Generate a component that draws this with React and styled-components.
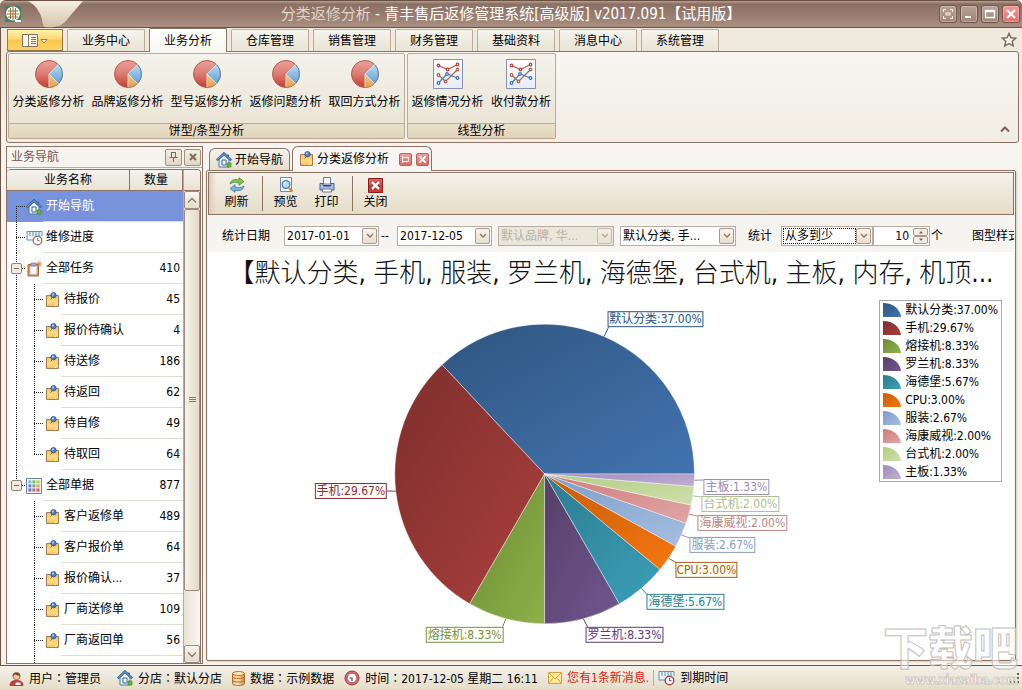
import React, { useState } from "react";
import styled, { createGlobalStyle, css } from "styled-components";

const LINE = "#8b7365";
const SOFT = "#b9aa9b";

const ribbonTabs = [
  "业务中心",
  "业务分析",
  "仓库管理",
  "销售管理",
  "财务管理",
  "基础资料",
  "消息中心",
  "系统管理",
];

const pieReports = [
  "分类返修分析",
  "品牌返修分析",
  "型号返修分析",
  "返修问题分析",
  "取回方式分析",
];
const lineReports = ["返修情况分析", "收付款分析"];

// guides: one entry per tree column, left to right
const navRows = [
  { name: "开始导航", icon: "home", guides: ["start"] },
  { name: "维修进度", icon: "progress", guides: ["tee"] },
  { name: "全部任务", count: 410, icon: "clipboard", guides: ["tee"], parent: true },
  { name: "待报价", count: 45, icon: "note", guides: ["line", "tee"] },
  { name: "报价待确认", count: 4, icon: "note", guides: ["line", "tee"] },
  { name: "待送修", count: 186, icon: "note", guides: ["line", "tee"] },
  { name: "待返回", count: 62, icon: "note", guides: ["line", "tee"] },
  { name: "待自修", count: 49, icon: "note", guides: ["line", "tee"] },
  { name: "待取回", count: 64, icon: "note", guides: ["line", "end"] },
  { name: "全部单据", count: 877, icon: "grid", guides: ["end"], parent: true },
  { name: "客户返修单", count: 489, icon: "note", guides: ["none", "tee"] },
  { name: "客户报价单", count: 64, icon: "note", guides: ["none", "tee"] },
  { name: "报价确认...", count: 37, icon: "note", guides: ["none", "tee"] },
  { name: "厂商送修单", count: 109, icon: "note", guides: ["none", "tee"] },
  { name: "厂商返回单", count: 56, icon: "note", guides: ["none", "tee"] },
];

// box: x, y, width of the callout; end: where the leader meets it
const slices = [
  { name: "默认分类", value: 37.0, from: "#305680", to: "#4273b0", ink: "#2f5680", bg: "#f4fbff", box: [400, 17, 96], end: [401, 33] },
  { name: "手机", value: 29.67, from: "#7d2f2d", to: "#ab3f3c", ink: "#843230", bg: "#fff8f8", box: [107, 189, 72], end: [179, 197] },
  { name: "熔接机", value: 8.33, from: "#6c8b36", to: "#8eb148", ink: "#748f42", bg: "#fdfff6", box: [218, 333, 78], end: [295, 333] },
  { name: "罗兰机", value: 8.33, from: "#554069", to: "#72568f", ink: "#58426e", bg: "#fcf9ff", box: [378, 333, 78], end: [380, 333] },
  { name: "海德堡", value: 5.67, from: "#2c7d90", to: "#3b9fb9", ink: "#2c7f90", bg: "#f4feff", box: [439, 300, 78], end: [440, 301] },
  { name: "CPU", value: 3.0, from: "#c85c09", to: "#f4770f", ink: "#a85c20", bg: "#fffdee", box: [468, 268, 62], end: [469, 269] },
  { name: "服装", value: 2.67, from: "#7c9ecb", to: "#a5bee0", ink: "#8b9db9", bg: "#fcfdff", box: [482, 243, 66], end: [482, 244] },
  { name: "海康威视", value: 2.0, from: "#cd7c7b", to: "#e1a6a5", ink: "#b88886", bg: "#fffdfd", box: [490, 221, 90], end: [490, 222] },
  { name: "台式机", value: 2.0, from: "#b2cc83", to: "#cfdfae", ink: "#afbc93", bg: "#fefffc", box: [494, 202, 78], end: [494, 203] },
  { name: "主板", value: 1.33, from: "#a08cbb", to: "#c0b1d3", ink: "#9b8eac", bg: "#fefdff", box: [496, 185, 66], end: [496, 186] },
];

/* ---------- icons ---------- */

const HomeIcon = () => (
  <svg width="16" height="16" viewBox="0 0 16 16" aria-hidden="true">
    <path d="M3 7.500V15h10V7.500L8 3z" fill="#e8f1fb" stroke="#4c76ab" />
    <path d="M12 2.500V5" stroke="#4c76ab" strokeWidth="2" />
    <path d="M.8 8.300L8 1.500l7.200 6.800" fill="none" stroke="#2f6096" strokeWidth="2.400" />
    <path d="M1.300 7.900L8 1.700l6.700 6.200" fill="none" stroke="#82b0da" strokeWidth="1" />
    <path d="M6 8h4v5H6z" fill="#fff" stroke="#3d5f92" />
    <path d="M11 11h4v4h-4z" fill="#63b83c" stroke="#3a8a2a" strokeWidth=".7" />
  </svg>
);

const ProgressIcon = ({ clock = "#9a7b6d" }) => (
  <svg width="17" height="16" viewBox="0 0 17 16" aria-hidden="true">
    <path d="M1 10V1.500h15V6" fill="#eef6fd" />
    <path d="M1 10V1.500h15V6M1 10h6M4 2v4M7 2v4M10 2v4M13 2v4" fill="none" stroke="#5a8fb9" />
    <circle cx="11.500" cy="10.500" r="4.300" fill="#fff" stroke={clock} strokeWidth="1.400" />
    <path d="M11.500 8v2.700h2.200" fill="none" stroke={clock} />
  </svg>
);

const ClipboardIcon = () => (
  <svg width="16" height="16" viewBox="0 0 16 16" aria-hidden="true">
    <path d="M2 3.500h10.500V15H2z" fill="#e8984a" stroke="#b7652a" />
    <path d="M4 5h7v8.500H4z" fill="#f4f7fc" stroke="#9aa5ba" strokeWidth=".6" />
    <path d="M5 2h5v3H5z" fill="#9fb0cc" stroke="#6b7a99" strokeWidth=".7" />
    <path d="M13 0v6M10 3h6M11 1l4 4M15 1l-4 4" stroke="#d98431" strokeWidth=".9" />
  </svg>
);

const NoteIcon = () => (
  <svg width="15" height="16" viewBox="0 0 15 16" aria-hidden="true">
    <path d="M1.500 3.500h12v11h-12z" fill="url(#noteFill)" stroke="#a97a4c" />
    <path d="M10 14l3-3" stroke="#fff0bd" />
    <circle cx="8.500" cy="3.200" r="2.700" fill="#4b82bd" stroke="#2a568c" strokeWidth=".8" />
    <circle cx="8" cy="2.500" r="1" fill="#b7d7f2" />
    <path d="M7 6l-1.500 1.500" stroke="#8a6239" />
  </svg>
);

const GridIcon = () => (
  <svg width="16" height="16" viewBox="0 0 16 16" aria-hidden="true">
    <path d="M.5.5h15v15H.5z" fill="#f3f5fb" stroke="#7482a8" />
    {["#6fc0d6", "#72b866", "#b6cc4c", "#5a86d0", "#5fae8a", "#e3a54a", "#7a6fc0", "#b863a4", "#dc6a4c"].map((c, i) => (
      <rect key={c} x={2 + (i % 3) * 4} y={2 + Math.floor(i / 3) * 4} width="4" height="4" fill={c} stroke="#f3f5fb" strokeWidth=".8" />
    ))}
  </svg>
);

const icons = {
  home: HomeIcon,
  progress: ProgressIcon,
  clipboard: ClipboardIcon,
  note: NoteIcon,
  grid: GridIcon,
};

const PieIcon = () => (
  <svg width="30" height="30" viewBox="0 0 30 30" aria-hidden="true">
    <circle cx="15" cy="15" r="13.500" fill="url(#pieRed)" stroke="#b35a50" />
    <path d="M15 15l9.500-9.500A13.500 13.500 0 0 1 24.500 24.500z" fill="url(#pieBlue)" stroke="#4d83b8" strokeWidth=".8" />
    <path d="M15 15l9.500 9.500A13.500 13.500 0 0 1 15 28.500z" fill="url(#pieOrange)" stroke="#b98346" strokeWidth=".8" />
    <path d="M15 28V15L24.500 5.500M15 15l9.500 9.500" fill="none" stroke="#fff" strokeOpacity=".7" />
  </svg>
);

const LineIcon = () => (
  <svg width="30" height="30" viewBox="0 0 30 30" aria-hidden="true">
    <path d="M.5.5h29v29H.5z" fill="url(#lineFill)" stroke="#8591b0" />
    <g fill="none" strokeWidth="1.200">
      <path d="M5.500 6.500l9 4 10-5" stroke="#c45a55" />
      <path d="M5.500 16l7 6.500 12-12" stroke="#a8664c" />
      <path d="M5.500 24l8.500-9 10.500 4" stroke="#4a7fc0" />
    </g>
    <g fill="#fff" strokeWidth="1.200">
      {[[5.5, 6.5], [14.5, 10.5], [24.5, 5.5]].map(([x, y]) => <circle key={x} cx={x} cy={y} r="1.300" stroke="#b8403c" />)}
      {[[5.5, 16], [12.5, 22.5], [24.5, 10.5]].map(([x, y]) => <circle key={x} cx={x} cy={y} r="1.300" stroke="#a8603c" />)}
      {[[5.5, 24], [14, 15], [24.5, 19]].map(([x, y]) => <circle key={x} cx={x} cy={y} r="1.300" stroke="#3b6fb5" />)}
    </g>
  </svg>
);

const RefreshIcon = () => (
  <svg width="16" height="16" viewBox="0 0 16 16" aria-hidden="true">
    <path d="M1 7c.5-4 5-5.500 9-4V.700L15 4.500 10 8.300V6C7 5 4 5 1 7z" fill="#8cc152" stroke="#4f8a2c" strokeWidth=".8" />
    <path d="M15 9c-.5 4-5 5.500-9 4v2.300L1 11.500 6 7.700V10c3 1 6 1 9-1z" fill="#7fb2dc" stroke="#3d74a8" strokeWidth=".8" />
  </svg>
);

const PreviewIcon = () => (
  <svg width="16" height="16" viewBox="0 0 16 16" aria-hidden="true">
    <path d="M2.500.5h11v14h-11z" fill="#fafcff" stroke="#7087b5" />
    <path d="M11 11l3.500 3.500" stroke="#d08a43" strokeWidth="2.400" />
    <circle cx="8" cy="7.500" r="3.800" fill="#b9dbf5" stroke="#3f7dbb" strokeWidth="1.300" />
    <path d="M6 7a2 2 0 0 1 2-2" fill="none" stroke="#fff" />
  </svg>
);

const PrintIcon = () => (
  <svg width="16" height="16" viewBox="0 0 16 16" aria-hidden="true">
    <path d="M4.500.5h7V7h-7z" fill="#fff" stroke="#5c77a8" />
    <path d="M1 6.500h3v2h8v-2h3V13H1z" fill="#a8bfe3" stroke="#3f5c94" />
    <path d="M4.500 8h7v1.500h-7z" fill="#33415c" />
    <path d="M3.500 12h9v3h-9z" fill="#fff" stroke="#5c77a8" />
  </svg>
);

const CloseIcon = () => (
  <svg width="15" height="15" viewBox="0 0 15 15" aria-hidden="true">
    <path d="M.5.5h14v14H.5z" fill="#cf3b38" stroke="#8d1d1c" />
    <path d="M1 1h13v6H1z" fill="#e27670" opacity=".6" />
    <path d="M4 4l7 7M11 4l-7 7" stroke="#8d1d1c" strokeWidth="4" />
    <path d="M4 4l7 7M11 4l-7 7" stroke="#fff" strokeWidth="2.600" />
  </svg>
);

const UserIcon = () => (
  <svg width="15" height="15" viewBox="0 0 15 15" aria-hidden="true">
    <path d="M1 14.500c0-4 3-5 6.500-5s6.500 1 6.500 5z" fill="#c93a34" stroke="#8d2521" strokeWidth=".7" />
    <circle cx="7.500" cy="5" r="3.600" fill="#f2c79c" stroke="#7a4a2c" strokeWidth=".7" />
    <path d="M3.700 5.500C3 .5 12 .5 11.300 5.500 10 4 7 4.500 6 3.300 5.500 4.500 4.500 4.500 3.700 5.500z" fill="#7c452a" />
    <path d="M6.500 11.500h5v2.500h-5z" fill="#fff" />
  </svg>
);

const DatabaseIcon = () => (
  <svg width="13" height="15" viewBox="0 0 13 15" aria-hidden="true">
    <path d="M.5 2.500v10c0 2.700 12 2.700 12 0v-10" fill="url(#dbFill)" stroke="#b0712d" />
    <ellipse cx="6.500" cy="2.500" rx="6" ry="2" fill="#fce7b6" stroke="#b0712d" />
    <path d="M.5 6c1 2 11 2 12 0M.5 9.500c1 2 11 2 12 0" fill="none" stroke="#a8672a" />
  </svg>
);

const ClockIcon = () => (
  <svg width="16" height="16" viewBox="0 0 16 16" aria-hidden="true">
    <circle cx="8" cy="8" r="7" fill="#d9696a" stroke="#9c3c3e" />
    <circle cx="8" cy="8" r="4.800" fill="#fff" stroke="#a94d4e" strokeWidth=".8" />
    <path d="M5.500 8H8v3" fill="none" stroke="#5c4a58" strokeWidth="1.200" />
  </svg>
);

const MailIcon = () => (
  <svg width="14" height="12" viewBox="0 0 14 12" aria-hidden="true">
    <path d="M.5.5h13v11H.5z" fill="#fdea9a" stroke="#d2a53d" />
    <path d="M1 1l6 6 6-6M1 11l4-5M13 11L9 6" fill="none" stroke="#d2a53d" />
  </svg>
);

const SharedGradients = () => (
  <SvgDefs aria-hidden="true">
    <defs>
      <linearGradient id="noteFill" x1="0" y1="0" x2="0" y2="1">
        <stop offset="0" stopColor="#f3c65d" />
        <stop offset=".6" stopColor="#fadb85" />
        <stop offset="1" stopColor="#f2c05b" />
      </linearGradient>
      <linearGradient id="pieRed" x1="0" y1="0" x2="0" y2="1">
        <stop offset="0" stopColor="#e9a198" />
        <stop offset=".45" stopColor="#dd8178" />
        <stop offset="1" stopColor="#c53c33" />
      </linearGradient>
      <linearGradient id="pieBlue" x1="0" y1="0" x2="0" y2="1">
        <stop offset="0" stopColor="#b9dcf4" />
        <stop offset="1" stopColor="#5f9fd6" />
      </linearGradient>
      <linearGradient id="pieOrange" x1="0" y1="0" x2="0" y2="1">
        <stop offset="0" stopColor="#f8cf8b" />
        <stop offset="1" stopColor="#e39a4b" />
      </linearGradient>
      <linearGradient id="lineFill" x1="0" y1="0" x2="0" y2="1">
        <stop offset="0" stopColor="#ffffff" />
        <stop offset="1" stopColor="#e6ebf7" />
      </linearGradient>
      <linearGradient id="dbFill" x1="0" y1="0" x2="1" y2="0">
        <stop offset="0" stopColor="#f0b45c" />
        <stop offset=".4" stopColor="#fde8b8" />
        <stop offset="1" stopColor="#d28a3a" />
      </linearGradient>
      {slices.map((s, i) => (
        <linearGradient key={s.name} id={`slice${i}`} x1="0" y1="0" x2="1" y2="1">
          <stop offset="0" stopColor={s.from} />
          <stop offset="1" stopColor={s.to} />
        </linearGradient>
      ))}
    </defs>
  </SvgDefs>
);

/* ---------- chart ---------- */

const CX = 337;
const CY = 180;
const R = 150;

const pointAt = (turn) => {
  const a = turn * Math.PI * 2;
  return [CX + R * Math.cos(a), CY - R * Math.sin(a)];
};

const label = (s) => `${s.name}:${s.value.toFixed(2)}%`;

const PieChart = () => {
  let sum = 0;
  const parts = slices.map((s) => {
    const start = sum / 100;
    sum += s.value;
    return { ...s, start, stop: sum / 100 };
  });

  return (
    <ChartSvg viewBox="0 0 672 352" role="img" aria-label="分类返修分析">
      {parts.map((s, i) => {
        const [x1, y1] = pointAt(s.start);
        const [x2, y2] = pointAt(s.stop);
        return (
          <path
            key={s.name}
            d={`M${CX} ${CY}L${x1} ${y1}A${R} ${R} 0 0 0 ${x2} ${y2}z`}
            fill={`url(#slice${i})`}
            stroke="#fff"
            strokeOpacity=".5"
            strokeWidth=".8"
          />
        );
      })}
      {parts.map((s) => {
        const [x, y] = pointAt((s.start + s.stop) / 2);
        const [bx, by, bw] = s.box;
        return (
          <g key={s.name}>
            <path d={`M${x} ${y}L${s.end[0]} ${s.end[1]}`} stroke={s.ink} />
            <rect x={bx + 0.5} y={by + 0.5} width={bw - 1} height="15" fill={s.bg} stroke={s.ink} />
            <text x={bx + bw / 2} y={by + 12} textAnchor="middle" fill={s.ink}>{label(s)}</text>
          </g>
        );
      })}
    </ChartSvg>
  );
};

/* ---------- small parts ---------- */

const Chevron = () => (
  <svg width="8" height="6" viewBox="0 0 8 6" aria-hidden="true">
    <path d="M1 1l3 3 3-3" fill="none" stroke="#8b7365" strokeWidth="1.300" />
  </svg>
);

const DateField = ({ title, initial }) => {
  const [value, setValue] = useState(initial);
  return (
    <Field $width={95}>
      <FieldInput aria-label={title} value={value} onChange={(e) => setValue(e.target.value)} />
      <DropButton type="button" aria-label={`${title} ▾`}><Chevron /></DropButton>
    </Field>
  );
};

const SelectField = ({ title, text, width, disabled, focused }) => (
  <Field $width={width} $disabled={disabled}>
    <FieldSelect aria-label={title} disabled={disabled} $focused={focused}>
      <option>{text}</option>
    </FieldSelect>
    <DropButton as="span" $disabled={disabled}><Chevron /></DropButton>
  </Field>
);

const NavRow = ({ row, selected, onSelect }) => {
  const Icon = icons[row.icon];
  return (
    <Row $selected={selected} onClick={onSelect}>
      <td>
        <NameCell>
          {row.guides.map((g, i) => (
            <Guide key={i} $kind={g}>
              {row.parent && <Expander type="button" aria-label={row.name} />}
            </Guide>
          ))}
          <IconSlot><Icon /></IconSlot>
          <NameText>{row.name}</NameText>
        </NameCell>
      </td>
      <CountCell>{row.count}</CountCell>
    </Row>
  );
};

const App = () => {
  const [tab, setTab] = useState(1);
  const [selected, setSelected] = useState(0);
  const [limit, setLimit] = useState("10");

  return (
    <Window>
      <GlobalStyle />
      <SharedGradients />

      <TitleBar>
        <svg width="16" height="16" viewBox="0 0 16 16" aria-hidden="true">
          <path d="M0 0h16v16H0z" fill="#3f8067" />
          <circle cx="8" cy="7.500" r="7" fill="#fffdf2" />
          <path d="M3 5h10M2 8h12M3 11h10M5.500 2v11M8 1v13M10.500 2v11" stroke="#99703e" />
          <path d="M10 14h6v2h-6z" fill="#fff" />
        </svg>
        <svg width="59" height="27" viewBox="0 0 59 27" aria-hidden="true">
          <defs>
            <linearGradient id="swoosh" x1="0" y1="0" x2="0" y2="1">
              <stop offset="0" stopColor="#f4f0e2" />
              <stop offset="1" stopColor="#d6c4a9" />
            </linearGradient>
          </defs>
          <path d="M4 0h55C51 9 46 15 42 20c-5 5-9 7-22 6-2-3-1-9-5-15C12 5 9 3 4 0z" fill="url(#swoosh)" />
        </svg>
        <TitleText><span>分类返修分析</span> - 青丰售后返修管理系统[高级版] v2017.091【试用版】</TitleText>
        <WindowButton type="button" aria-label="全屏">
          <svg width="12" height="12" viewBox="0 0 12 12">
            <path d="M1.500 4V1.500H4M8 1.500h2.500V4M10.500 8v2.500H8M4 10.500H1.500V8M4 5h4v2H4z" fill="none" stroke="#f4e9e2" strokeWidth="1.200" />
          </svg>
        </WindowButton>
        <WindowButton type="button" aria-label="最小化">
          <svg width="12" height="12" viewBox="0 0 12 12"><path d="M2 9h6" stroke="#fff" strokeWidth="2" /></svg>
        </WindowButton>
        <WindowButton type="button" aria-label="最大化">
          <svg width="12" height="12" viewBox="0 0 12 12"><path d="M1.500 2.500h9v7h-9zM1 3.500h10" fill="none" stroke="#fff" strokeWidth="1.300" /></svg>
        </WindowButton>
        <WindowButton type="button" aria-label="关闭" $danger>
          <svg width="12" height="12" viewBox="0 0 12 12"><path d="M2 2l8 8M10 2l-8 8" stroke="#fff" strokeWidth="2.400" /></svg>
        </WindowButton>
      </TitleBar>

      <Client>
        <TabRow>
          <MenuButton type="button" aria-label="菜单">
            <svg width="26" height="13" viewBox="0 0 26 13">
              <path d="M.5.5h15v12H.5z" fill="#fffbe8" stroke="#83715c" />
              <path d="M6.500 1v11M9 3.500h5M9 5.500h5M9 7.500h5M9 9.500h5" stroke="#83715c" />
              <path d="M19 5.500h6l-3 3.500z" fill="#fff" stroke="#a37a3c" />
            </svg>
          </MenuButton>
          {ribbonTabs.map((t, i) => (
            <RibbonTab key={t} type="button" $active={i === tab} onClick={() => setTab(i)}>{t}</RibbonTab>
          ))}
          <Spacer />
          <BareButton type="button" aria-label="收藏">
            <svg width="16" height="16" viewBox="0 0 16 16">
              <path d="M8 1.500l2 4.200 4.600.5-3.400 3.100 1 4.600L8 11.600 3.800 13.900l1-4.600L1.400 6.200 6 5.700z" fill="#fff" stroke="#7d6a5e" strokeWidth="1.500" />
            </svg>
          </BareButton>
        </TabRow>

        <Ribbon>
          <Group>
            <GroupItems>
              {pieReports.map((r) => (
                <ReportButton key={r} type="button"><PieIcon />{r}</ReportButton>
              ))}
            </GroupItems>
            <GroupTitle>饼型/条型分析</GroupTitle>
          </Group>
          <Group>
            <GroupItems>
              {lineReports.map((r) => (
                <ReportButton key={r} type="button" $narrow={r.length < 6}><LineIcon />{r}</ReportButton>
              ))}
            </GroupItems>
            <GroupTitle>线型分析</GroupTitle>
          </Group>
          <Spacer />
          <CollapseButton type="button" aria-label="折叠">
            <svg width="10" height="7" viewBox="0 0 10 7"><path d="M1 5.500l4-4 4 4" fill="none" stroke="#7d6357" strokeWidth="2" /></svg>
          </CollapseButton>
        </Ribbon>

        <Workspace>
          <NavPanel>
            <PanelHeader>
              <h2>业务导航</h2>
              <PanelButton type="button" aria-label="固定">
                <svg width="9" height="10" viewBox="0 0 9 10"><path d="M2.500 0v5M6.500 0v5M2 .5h5M.5 5.500h8M4.500 6v4" fill="none" stroke="#7d6a5e" /></svg>
              </PanelButton>
              <PanelButton type="button" aria-label="关闭">
                <svg width="8" height="8" viewBox="0 0 8 8"><path d="M1 1l6 6M7 1L1 7" stroke="#7d6a5e" strokeWidth="2" /></svg>
              </PanelButton>
            </PanelHeader>
            <TreeBox>
              <TreeScroll>
                <NavTable>
                  <thead>
                    <tr>
                      <th>业务名称</th>
                      <CountHead>数量</CountHead>
                    </tr>
                  </thead>
                  <tbody>
                    {navRows.map((row, i) => (
                      <NavRow key={row.name} row={row} selected={i === selected} onSelect={() => setSelected(i)} />
                    ))}
                  </tbody>
                </NavTable>
                <TreeTail><Guide $kind="none" /><Guide $kind="line" /></TreeTail>
              </TreeScroll>
              <ScrollColumn>
                <HeadFiller />
                <ScrollButton type="button" aria-label="向上">
                  <svg width="10" height="7" viewBox="0 0 10 7"><path d="M1 5.500l4-4 4 4" fill="none" stroke="#8b7365" strokeWidth="1.300" /></svg>
                </ScrollButton>
                <Thumb><i /><i /><i /></Thumb>
                <Track />
                <ScrollButton type="button" aria-label="向下">
                  <svg width="10" height="7" viewBox="0 0 10 7"><path d="M1 1.500l4 4 4-4" fill="none" stroke="#8b7365" strokeWidth="1.300" /></svg>
                </ScrollButton>
              </ScrollColumn>
            </TreeBox>
          </NavPanel>

          <Document>
            <DocTabs>
              <DocTab><a href="#start"><HomeIcon />开始导航</a></DocTab>
              <DocTab $active>
                <a href="#report"><NoteIcon />分类返修分析</a>
                <TabAction type="button" aria-label="还原">
                  <svg width="7" height="7" viewBox="0 0 7 7"><path d="M.5 0v7M1 1.500h5.500v4H1" fill="none" stroke="#fff" /></svg>
                </TabAction>
                <TabAction type="button" aria-label="关闭标签">
                  <svg width="7" height="7" viewBox="0 0 7 7"><path d="M0 0l7 7M7 0L0 7" stroke="#fff" strokeWidth="1.800" /></svg>
                </TabAction>
              </DocTab>
            </DocTabs>
            <DocFrame>
              <Toolbar>
                <ToolButton type="button"><RefreshIcon />刷新</ToolButton>
                <ToolDivider />
                <ToolButton type="button"><PreviewIcon />预览</ToolButton>
                <ToolButton type="button"><PrintIcon />打印</ToolButton>
                <ToolDivider />
                <ToolButton type="button"><CloseIcon />关闭</ToolButton>
              </Toolbar>

              <FilterBar>
                <DateLabel>统计日期</DateLabel>
                <DateField title="开始日期" initial="2017-01-01" />
                <Dash>--</Dash>
                <DateField title="结束日期" initial="2017-12-05" />
                <ComboPair>
                  <SelectField title="品牌" text="默认品牌, 华..." width={116} disabled />
                  <SelectField title="分类" text="默认分类, 手..." width={116} />
                </ComboPair>
                <CountLabel>统计</CountLabel>
                <SelectField title="排序" text="从多到少" width={92} focused />
                <Field $width={57}>
                  <FieldInput id="limit" aria-label="数量" $right value={limit} onChange={(e) => setLimit(e.target.value)} />
                  <Spinner>
                    <button type="button" aria-label="增加" onClick={() => setLimit(String(Number(limit) + 1))}>
                      <svg width="6" height="4" viewBox="0 0 6 4"><path d="M1 3.500h4L3 1z" fill="#7d6357" /></svg>
                    </button>
                    <button type="button" aria-label="减少" onClick={() => setLimit(String(Number(limit) - 1))}>
                      <svg width="6" height="4" viewBox="0 0 6 4"><path d="M1 .5h4L3 3z" fill="#7d6357" /></svg>
                    </button>
                  </Spinner>
                </Field>
                <UnitLabel htmlFor="limit">个</UnitLabel>
                <span>图型样式</span>
              </FilterBar>

              <ChartArea>
                <ChartTitle>【默认分类, 手机, 服装, 罗兰机, 海德堡, 台式机, 主板, 内存, 机顶...</ChartTitle>
                <ChartBody>
                  <PieChart />
                  <Legend>
                    {slices.map((s, i) => (
                      <li key={s.name}>
                        <svg width="18" height="14" viewBox="0 0 18 14" aria-hidden="true">
                          <path d="M0 14V0c10 0 17 6 18 14z" fill={`url(#slice${i})`} />
                        </svg>
                        {label(s)}
                      </li>
                    ))}
                  </Legend>
                </ChartBody>
              </ChartArea>
            </DocFrame>
          </Document>
        </Workspace>
      </Client>

      <StatusBar>
        <StatusItem $wide><UserIcon /><span>用户<Colon>：</Colon>管理员</span></StatusItem>
        <StatusItem><HomeIcon /><span>分店<Colon>：</Colon>默认分店</span></StatusItem>
        <StatusItem><DatabaseIcon /><span>数据<Colon>：</Colon>示例数据</span></StatusItem>
        <StatusItem><ClockIcon /><span>时间<Colon>：</Colon>2017-12-05 星期二 16:11</span></StatusItem>
        <StatusItem $alert><MailIcon /><span>您有1条新消息.</span></StatusItem>
        <StatusItem $divided><ProgressIcon clock="#a84a4c" /><span>到期时间</span></StatusItem>
        <Spacer />
        <svg width="11" height="11" viewBox="0 0 11 11" aria-hidden="true">
          <path d="M8 0h2v2H8zM8 4h2v2H8zM8 8h2v2H8zM4 4h2v2H4zM4 8h2v2H4zM0 8h2v2H0z" fill="#6e5c50" />
        </svg>
      </StatusBar>

      <Watermark>
        <strong>下载吧</strong>
        <span>www.xiazaiba.com</span>
      </Watermark>
    </Window>
  );
};

/* ---------- styles ---------- */

const GlobalStyle = createGlobalStyle`
  * {
    box-sizing: border-box;
  }
  body {
    margin: 0;
    background: #fbece1;
    font-family: "DejaVu Sans Condensed", "Noto Sans CJK SC", sans-serif;
    font-size: 12px;
    line-height: 16px;
    color: #000;
  }
  button, input, select {
    font: inherit;
    color: inherit;
    padding: 0;
    margin: 0;
  }
  svg {
    flex: none;
    display: block;
  }
`;

const SvgDefs = styled.svg`
  position: absolute;
  width: 0;
  height: 0;
`;

const Window = styled.div`
  position: relative;
  display: flex;
  flex-direction: column;
  height: 100vh;
  overflow: hidden;
`;

const Spacer = styled.div`
  flex: 1;
`;

const TitleBar = styled.header`
  display: flex;
  align-items: center;
  gap: 3px;
  flex: none;
  height: 28px;
  padding: 0 2px 0 5px;
  border-top: 1px solid #6b5044;
  border-bottom: 1px solid #6b5044;
  border-radius: 6px 6px 0 0;
  background: linear-gradient(#b59f94 0, #8b6f63 3px, #9a7e71 60%, #ab8f81 100%);
`;

const TitleText = styled.h1`
  flex: 1;
  margin: 0;
  font-size: 15px;
  line-height: 20px;
  font-weight: 400;
  text-align: center;
  white-space: nowrap;
  color: #fff;
  span {
    color: #e2d3c8;
  }
`;

const WindowButton = styled.button`
  display: flex;
  align-items: center;
  justify-content: center;
  width: 18px;
  height: 18px;
  border: 1px solid #6e5549;
  border-radius: 3px;
  box-shadow: inset 0 0 0 1px rgba(255, 255, 255, 0.3);
  background: ${(p) =>
    p.$danger ? "linear-gradient(#f09a98, #e46c6a)" : "linear-gradient(#b7a094, #a0877a)"};
`;

const Client = styled.div`
  display: flex;
  flex-direction: column;
  flex: 1;
  min-height: 0;
  padding: 0 3px 1px 5px;
  border-left: 1px solid #6b5346;
  background: linear-gradient(#efeadd 0, #efeadd 60px, #fbf3ec 116px);
`;

const TabRow = styled.nav`
  display: flex;
  align-items: flex-end;
  gap: 4px;
  height: 23px;
  padding: 0 2px 0 1px;
`;

const MenuButton = styled.button`
  display: flex;
  align-items: center;
  justify-content: center;
  width: 56px;
  height: 22px;
  border: 1px solid #94744c;
  background: linear-gradient(#fff2ab, #fdd874 45%, #fbc64b 50%, #fdd368);
`;

const RibbonTab = styled.button`
  width: 78px;
  height: 22px;
  border: 1px solid ${SOFT};
  border-bottom: 0;
  border-radius: 2px 2px 0 0;
  background: linear-gradient(#f5f3ec, #e9e3d4);
  ${(p) =>
    p.$active &&
    css`
      height: 24px;
      margin-bottom: -1px;
      border-color: ${LINE};
      background: linear-gradient(#ffffff, #f9f7f3);
      z-index: 1;
    `}
`;

const BareButton = styled.button`
  border: 0;
  background: none;
  align-self: center;
`;

const Ribbon = styled.section`
  display: flex;
  gap: 2px;
  flex: none;
  height: 92px;
  padding: 1px 8px 3px 1px;
  border: 1px solid ${LINE};
  border-radius: 3px;
  background: linear-gradient(#f8f6f2, #f1ede3);
`;

const Group = styled.div`
  display: flex;
  flex-direction: column;
  border: 1px solid ${SOFT};
  border-radius: 2px;
  background: linear-gradient(#f4f2ea, #e8e2d2);
`;

const GroupItems = styled.div`
  display: flex;
  flex: 1;
`;

const ReportButton = styled.button`
  display: flex;
  flex-direction: column;
  align-items: center;
  gap: 5px;
  width: ${(p) => (p.$narrow ? 68 : 79)}px;
  padding-top: 5px;
  border: 0;
  background: none;
  white-space: nowrap;
`;

const GroupTitle = styled.div`
  height: 15px;
  line-height: 15px;
  border-top: 1px solid ${SOFT};
  background: linear-gradient(#eae1cd, #e0d3b9);
  text-align: center;
`;

const CollapseButton = styled(BareButton)`
  align-self: flex-end;
  padding-bottom: 6px;
`;

const Workspace = styled.div`
  display: flex;
  gap: 3px;
  flex: 1;
  min-height: 0;
  padding-top: 3px;
`;

const NavPanel = styled.aside`
  display: flex;
  flex-direction: column;
  width: 197px;
  flex: none;
  border: 1px solid ${LINE};
  background: #f6f4ef;
`;

const PanelHeader = styled.div`
  display: flex;
  align-items: center;
  gap: 2px;
  height: 21px;
  padding: 0 1px 0 4px;
  border-bottom: 1px solid ${SOFT};
  h2 {
    flex: 1;
    margin: 0;
    font-size: 12px;
    font-weight: 400;
    color: #7b5548;
  }
`;

const PanelButton = styled.button`
  display: flex;
  align-items: center;
  justify-content: center;
  width: 17px;
  height: 17px;
  border: 1px solid #a08f80;
  border-radius: 2px;
  background: linear-gradient(#f3eee2, #e2d6c1);
`;

const TreeBox = styled.div`
  display: flex;
  flex: 1;
  min-height: 0;
  margin: 1px 1px 0 0;
  border-top: 1px solid ${LINE};
  border-right: 1px solid ${LINE};
  border-radius: 4px 4px 0 0;
  background: #fff;
  overflow: hidden;
`;

const TreeScroll = styled.div`
  display: flex;
  flex-direction: column;
  flex: 1;
  min-width: 0;
  overflow: hidden;
`;

const NavTable = styled.table`
  width: 100%;
  flex: none;
  table-layout: fixed;
  border-collapse: separate;
  border-spacing: 0;
  th {
    height: 21px;
    padding: 0;
    font-weight: 400;
    border-right: 1px solid ${LINE};
    border-bottom: 1px solid ${LINE};
    background: linear-gradient(#f5f3ed, #e9e3d6);
  }
  td {
    height: 31px;
    padding: 0;
  }
`;

const CountHead = styled.th`
  width: 53px;
`;

const Row = styled.tr`
  cursor: default;
  ${(p) =>
    p.$selected &&
    css`
      background: #7893dc;
      color: #fff;
    `}
`;

const NameCell = styled.div`
  display: flex;
  height: 31px;
`;

const dotsDown = "repeating-linear-gradient(#222 0 1px, transparent 1px 2px)";
const dotsAcross = "repeating-linear-gradient(90deg, #222 0 1px, transparent 1px 2px)";

const guideArt = {
  none: "none",
  line: `${dotsDown} 9px 0 / 1px 100% no-repeat`,
  tee: `${dotsDown} 9px 0 / 1px 100% no-repeat, ${dotsAcross} 9px 15px / 9px 1px no-repeat`,
  end: `${dotsDown} 9px 0 / 1px 15px no-repeat, ${dotsAcross} 9px 15px / 9px 1px no-repeat`,
  start: `${dotsDown} 9px 15px / 1px 16px no-repeat, ${dotsAcross} 9px 15px / 9px 1px no-repeat`,
};

const Guide = styled.span`
  display: flex;
  align-items: center;
  justify-content: center;
  flex: none;
  width: 18px;
  height: 100%;
  background: ${(p) => guideArt[p.$kind]};
`;

const Expander = styled.button`
  width: 11px;
  height: 11px;
  border: 1px solid #95816f;
  border-radius: 2px;
  background: linear-gradient(#7d6a5e, #7d6a5e) center / 5px 1px no-repeat, #f1ebdf;
`;

const IconSlot = styled.span`
  display: flex;
  align-items: center;
  justify-content: center;
  flex: none;
  width: 18px;
`;

const NameText = styled.span`
  flex: 1;
  padding-left: 3px;
  line-height: 30px;
  white-space: nowrap;
  border-bottom: 1px solid #dfddd0;
`;

const CountCell = styled.td`
  padding-right: 3px !important;
  text-align: right;
  border-bottom: 1px solid #dfddd0;
`;

const TreeTail = styled.div`
  display: flex;
  flex: 1;
`;

const ScrollColumn = styled.div`
  display: flex;
  flex-direction: column;
  width: 17px;
  border-left: 1px solid ${SOFT};
  background: #f5f0e6;
`;

const HeadFiller = styled.div`
  flex: none;
  height: 21px;
  border-bottom: 1px solid ${LINE};
  background: linear-gradient(#f5f3ed, #e9e3d6);
`;

const ScrollButton = styled.button`
  display: flex;
  align-items: center;
  justify-content: center;
  flex: none;
  height: 18px;
  border: 1px solid #9d8c7d;
  border-radius: 2px;
  background: linear-gradient(#f8f5ee, #e6ddcb);
`;

const Thumb = styled.div`
  display: flex;
  flex-direction: column;
  align-items: center;
  justify-content: center;
  gap: 1px;
  flex: 7;
  border: 1px solid #9d8c7d;
  border-radius: 2px;
  background: linear-gradient(90deg, #f6f3eb, #e2dac8);
  i {
    width: 7px;
    height: 1px;
    background: #8b7365;
  }
`;

const Track = styled.div`
  flex: 1;
  background: linear-gradient(90deg, #e9e1d2, #fbf9f5);
`;

const Document = styled.main`
  display: flex;
  flex-direction: column;
  flex: 1;
  min-width: 0;
  padding: 0 3px 3px 0;
  background: #f7f5f1;
`;

const DocTabs = styled.nav`
  display: flex;
  align-items: flex-end;
  gap: 2px;
  height: 24px;
  padding-left: 3px;
`;

const DocTab = styled.div`
  display: flex;
  align-items: center;
  gap: 4px;
  height: ${(p) => (p.$active ? 25 : 22)}px;
  margin-bottom: ${(p) => (p.$active ? "-1px" : 0)};
  padding: 0 ${(p) => (p.$active ? 2 : 6)}px 0 6px;
  border: 1px solid ${LINE};
  border-bottom: 0;
  border-radius: 6px 6px 0 0;
  background: ${(p) => (p.$active ? "#f8f6f3" : "linear-gradient(#f6f3ec, #e6decb)")};
  z-index: 1;
  a {
    display: flex;
    align-items: center;
    gap: 3px;
    margin-right: ${(p) => (p.$active ? 6 : 0)}px;
    color: inherit;
    text-decoration: none;
  }
`;

const TabAction = styled.button`
  display: flex;
  align-items: center;
  justify-content: center;
  width: 13px;
  height: 13px;
  border: 1px solid #b8605c;
  border-radius: 2px;
  background: linear-gradient(#f0a09c, #dd6863);
`;

const DocFrame = styled.section`
  display: flex;
  flex-direction: column;
  flex: 1;
  min-height: 0;
  padding: 1px;
  border: 1px solid ${LINE};
  border-radius: 2px;
  background: #f6f4f0;
  box-shadow: 1px 1px 2px #d8cdbf;
`;

const Toolbar = styled.div`
  display: flex;
  align-items: center;
  flex: none;
  height: 43px;
  padding-left: 7px;
  border: 1px solid ${LINE};
  background: linear-gradient(90deg, #dccdb4, transparent 7px), linear-gradient(#f5f2ea, #e5dcc8);
`;

const ToolButton = styled.button`
  display: flex;
  flex-direction: column;
  align-items: center;
  gap: 1px;
  width: 41px;
  border: 0;
  background: none;
`;

const ToolDivider = styled.span`
  width: 1px;
  height: 35px;
  margin: 0 2px 0 5px;
  background: ${LINE};
`;

const FilterBar = styled.form`
  display: flex;
  align-items: center;
  flex: none;
  height: 37px;
  padding: 5px 0 0 14px;
  overflow: hidden;
  white-space: nowrap;
  > * {
    flex: none;
  }
`;

const DateLabel = styled.span`
  padding-right: 14px;
`;

const Dash = styled.span`
  width: 18px;
  padding-left: 2px;
`;

const ComboPair = styled.div`
  display: flex;
  gap: 6px;
  margin-left: 6px;
`;

const CountLabel = styled.span`
  padding: 0 9px 0 12px;
`;

const UnitLabel = styled.label`
  padding: 0 29px 0 1px;
`;

const Field = styled.div`
  display: flex;
  align-items: center;
  width: ${(p) => p.$width}px;
  height: 20px;
  padding: 1px;
  border: 1px solid #b9ab9e;
  background: ${(p) => (p.$disabled ? "#ebe6da" : "#fff")};
`;

const FieldInput = styled.input`
  flex: 1;
  min-width: 0;
  width: 0;
  height: 16px;
  padding: 0 ${(p) => (p.$right ? 4 : 1)}px;
  border: 0;
  outline: 0;
  background: none;
  text-align: ${(p) => (p.$right ? "right" : "left")};
`;

const FieldSelect = styled.select`
  flex: 1;
  min-width: 0;
  width: 0;
  height: 16px;
  padding: 0 1px;
  border: ${(p) => (p.$focused ? "1px dotted #222" : 0)};
  line-height: 14px;
  appearance: none;
  background: none;
  opacity: 1;
  &:disabled {
    color: #b9b2a6;
  }
`;

const DropButton = styled.button`
  display: flex;
  align-items: center;
  justify-content: center;
  flex: none;
  width: 15px;
  height: 16px;
  border: 1px solid #a8978a;
  border-radius: 2px;
  background: linear-gradient(#f8f5ee, #e8dfcd);
  pointer-events: none;
  opacity: ${(p) => (p.$disabled ? 0.55 : 1)};
`;

const Spinner = styled.span`
  display: flex;
  flex-direction: column;
  width: 15px;
  height: 16px;
  button {
    display: flex;
    align-items: center;
    justify-content: center;
    flex: 1;
    min-height: 0;
    border: 1px solid #a8978a;
    border-radius: 2px;
    background: #f3ede1;
  }
`;

const ChartArea = styled.div`
  flex: 1;
  min-height: 0;
  background: #fff;
  overflow: hidden;
`;

const ChartTitle = styled.h2`
  margin: 0;
  padding-top: 2px;
  font-size: 26px;
  line-height: 38px;
  font-weight: 300;
  text-align: center;
  white-space: nowrap;
  color: #111;
`;

const ChartBody = styled.div`
  display: flex;
  align-items: flex-start;
  padding-top: 2px;
`;

const ChartSvg = styled.svg`
  flex: 1;
  min-width: 0;
  width: 0;
  height: 352px;
`;

const Legend = styled.ul`
  flex: none;
  margin: 6px 12px 0 0;
  padding: 0 3px;
  border: 1px solid #a8a8a8;
  list-style: none;
  white-space: nowrap;
  li {
    display: flex;
    align-items: center;
    gap: 4px;
    height: 18px;
  }
`;

const StatusBar = styled.footer`
  display: flex;
  align-items: center;
  flex: none;
  gap: 10px;
  height: 25px;
  padding: 0 2px 0 9px;
  border-top: 1px solid #6b5346;
  background: linear-gradient(#f4f1e9, #e4dcc8);
`;

const StatusItem = styled.span`
  display: flex;
  align-items: center;
  gap: 5px;
  padding-right: ${(p) => (p.$wide ? 6 : 0)}px;
  white-space: nowrap;
  color: ${(p) => (p.$alert ? "#d81e12" : "inherit")};
  ${(p) =>
    p.$divided &&
    css`
      margin-left: -6px;
      padding-left: 4px;
      border-left: 1px solid ${SOFT};
    `}
`;

// the TC face centres the full-width colon
const Colon = styled.span`
  font-family: "Noto Sans CJK TC", sans-serif;
`;

const Watermark = styled.div`
  position: absolute;
  right: 4px;
  bottom: 3px;
  display: flex;
  flex-direction: column;
  align-items: flex-end;
  pointer-events: none;
  strong {
    font-size: 45px;
    line-height: 46px;
    font-weight: 900;
    color: rgba(255, 255, 255, 0.5);
    -webkit-text-stroke: 1px #c4c0ba;
  }
  span {
    font-size: 12px;
    line-height: 14px;
    font-weight: 700;
    color: #fff;
    -webkit-text-stroke: 1px rgba(190, 184, 174, 0.7);
  }
`;

export default App;
